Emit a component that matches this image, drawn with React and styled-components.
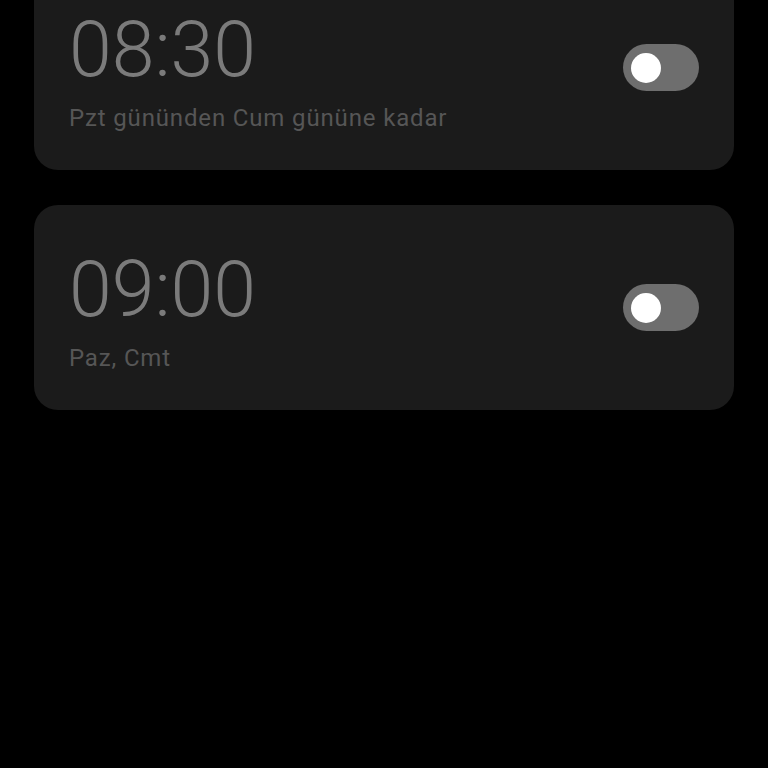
import React from "react";
import styled, { createGlobalStyle } from "styled-components";

const Global = createGlobalStyle`
  html, body { margin: 0; padding: 0; background: #000; }
  body { font-family: Roboto, "Noto Sans", sans-serif; }
`;

const Page = styled.div`
  width: 768px;
  height: 768px;
  overflow: hidden;
  background: #000;
`;

const List = styled.div`
  display: flex;
  flex-direction: column;
  gap: 35px;
  padding: 0 34px;
  margin-top: -35px;
`;

const Card = styled.div`
  box-sizing: border-box;
  height: 205px;
  background: #1b1b1b;
  border-radius: 24px;
  display: flex;
  align-items: center;
  justify-content: space-between;
  padding: 0 35px 0 35px;
`;

const Info = styled.div`
  display: flex;
  flex-direction: column;
  align-self: flex-start;
  padding-top: 47px;
`;

const Time = styled.div`
  font-size: 77px;
  line-height: 77px;
  font-weight: 300;
  color: #7b7b7b;
`;

const Repeat = styled.div`
  margin-top: 17px;
  font-size: 24px;
  line-height: 24px;
  letter-spacing: 0.85px;
  color: #565656;
`;

const Track = styled.div`
  position: relative;
  width: 76px;
  height: 47px;
  border-radius: 24px;
  background: #6e6e6e;
  flex-shrink: 0;
`;

const Knob = styled.div`
  position: absolute;
  left: 8px;
  top: 8.5px;
  width: 30px;
  height: 30px;
  border-radius: 50%;
  background: #fff;
`;

const alarms = [
  { time: "08:30", repeat: "Pzt gününden Cum gününe kadar" },
  { time: "09:00", repeat: "Paz, Cmt" },
];

export default function App() {
  return (
    <Page>
      <Global />
      <List>
        {alarms.map((a) => (
          <Card key={a.time}>
            <Info>
              <Time>{a.time}</Time>
              <Repeat>{a.repeat}</Repeat>
            </Info>
            <Track>
              <Knob />
            </Track>
          </Card>
        ))}
      </List>
    </Page>
  );
}
